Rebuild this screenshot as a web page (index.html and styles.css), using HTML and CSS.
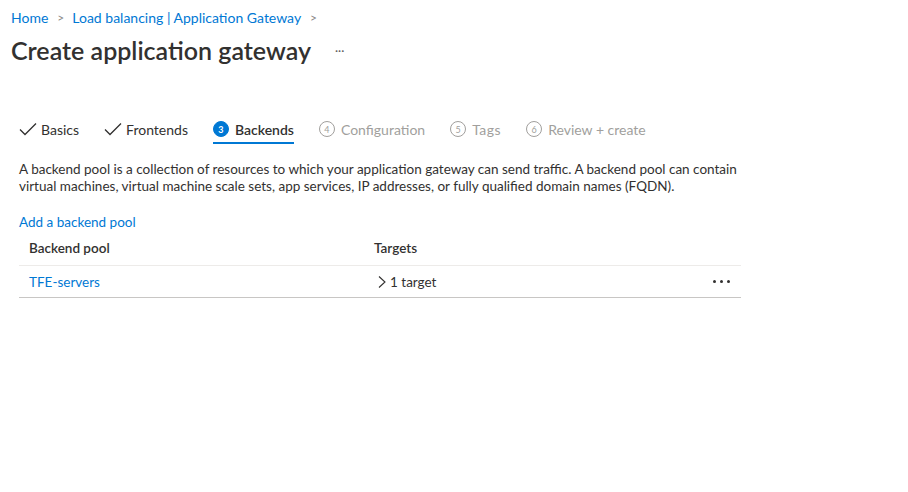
FILE: index.html
```html
<!DOCTYPE html>
<html>
<head>
<meta charset="utf-8">
<link rel="stylesheet" href="styles.css">
</head>
<body>
<div class="page">
  <nav class="crumbs">
    <a class="link">Home</a>
    <span class="chev">&gt;</span>
    <a class="link">Load balancing | Application Gateway</a>
    <span class="chev">&gt;</span>
  </nav>
  <div class="titlebar">
    <h1 class="title">Create application gateway</h1>
    <span class="title-more">···</span>
  </div>

  <div class="tabs">
    <div class="tab done">
      <svg class="check" width="18" height="14" viewBox="0 0 18 14"><path d="M1 7.5 L6 12.5 L17 1.5" fill="none" stroke="#323130" stroke-width="1.3"/></svg>
      <span>Basics</span>
    </div>
    <div class="tab done">
      <svg class="check" width="18" height="14" viewBox="0 0 18 14"><path d="M1 7.5 L6 12.5 L17 1.5" fill="none" stroke="#323130" stroke-width="1.3"/></svg>
      <span>Frontends</span>
    </div>
    <div class="tab active">
      <span class="num num-active">3</span>
      <span>Backends</span>
    </div>
    <div class="tab todo">
      <span class="num">4</span>
      <span>Configuration</span>
    </div>
    <div class="tab todo">
      <span class="num">5</span>
      <span class="wide">Tags</span>
    </div>
    <div class="tab todo">
      <span class="num">6</span>
      <span>Review + create</span>
    </div>
  </div>

  <section class="content">
    <p class="desc">A backend pool is a collection of resources to which your application gateway can send traffic. A backend pool can contain virtual machines, virtual machine scale sets, app services, IP addresses, or fully qualified domain names (FQDN).</p>
    <a class="link add">Add a backend pool</a>
    <div class="table">
      <div class="row head">
        <div class="c1">Backend pool</div>
        <div class="c2">Targets</div>
      </div>
      <div class="row">
        <div class="c1"><a class="link">TFE-servers</a></div>
        <div class="c2"><svg class="rchev" width="8" height="12" viewBox="0 0 8 12"><path d="M1 0.5 L7 6 L1 11.5" fill="none" stroke="#323130" stroke-width="1.1"/></svg>1 target</div>
        <div class="c3"><span class="dots"><i></i><i></i><i></i></span></div>
      </div>
    </div>
  </section>
</div>
</body>
</html>
```

FILE: styles.css
```css
* { box-sizing: border-box; }
body {
  margin: 0;
  background: #ffffff;
  font-family: "Lato", "Open Sans", sans-serif;
  color: #323130;
  font-size: 13.5px;
}
.page { padding: 0 0 0 11px; }
.link { color: #0078d4; text-decoration: none; }
.crumbs {
  display: flex;
  align-items: center;
  height: 20px;
  margin-top: 7px;
  font-size: 14px;
}
.chev { color: #8a8886; margin: 0 8px 0 9px; font-size: 12px; }
.titlebar { display: flex; align-items: center; margin-top: 6px; height: 34px; }
.title { margin: 0; font-size: 25px; font-weight: 600; color: #323130; }
.title-more { margin-left: 24px; color: #605e5c; font-size: 12px; letter-spacing: 0; }
.tabs {
  display: flex;
  margin-top: 47px;
  padding-left: 8px;
  height: 30px;
  font-size: 14px;
}
.tab {
  display: flex;
  align-items: center;
  height: 30px;
  margin-right: 25px;
  position: relative;
}
.tab .check { margin-right: 4px; }
.tab .wide { letter-spacing: 0.5px; }
.tab.active { font-weight: 600; }
.tab.active::after {
  content: "";
  position: absolute;
  left: 0; right: 0; bottom: 0;
  height: 2px;
  background: #0078d4;
}
.tab.todo { color: #a19f9d; }
.num {
  width: 16px; height: 16px;
  border-radius: 50%;
  border: 1px solid #a19f9d;
  font-size: 9px;
  display: inline-flex;
  align-items: center;
  justify-content: center;
  margin-right: 6px;
  color: #a19f9d;
  font-weight: 400;
}
.num-active { background: #0078d4; border-color: #0078d4; color: #fff; font-weight: 700; }
.content { padding-left: 8px; width: 730px; }
.desc { margin: 17px 0 0; line-height: 17px; }
.add { display: block; margin-top: 18px; line-height: 18px; }
.table { margin-top: 5px; }
.row {
  display: flex;
  align-items: center;
  height: 32px;
}
.row.head { font-weight: 600; height: 30px; padding-bottom: 5px; border-bottom: 1px solid #edebe9; }
.row:not(.head) { border-bottom: 1px solid #c8c6c4; }
.c1 { width: 355px; padding-left: 10px; }
.c2 { flex: 1; display: flex; align-items: center; }
.rchev { margin: 0 4px 0 4px; }
.c3 { width: 28px; display: flex; justify-content: flex-start; }
.dots { display: flex; gap: 4px; }
.dots i { width: 3px; height: 3px; border-radius: 50%; background: #323130; display: block; }
```
